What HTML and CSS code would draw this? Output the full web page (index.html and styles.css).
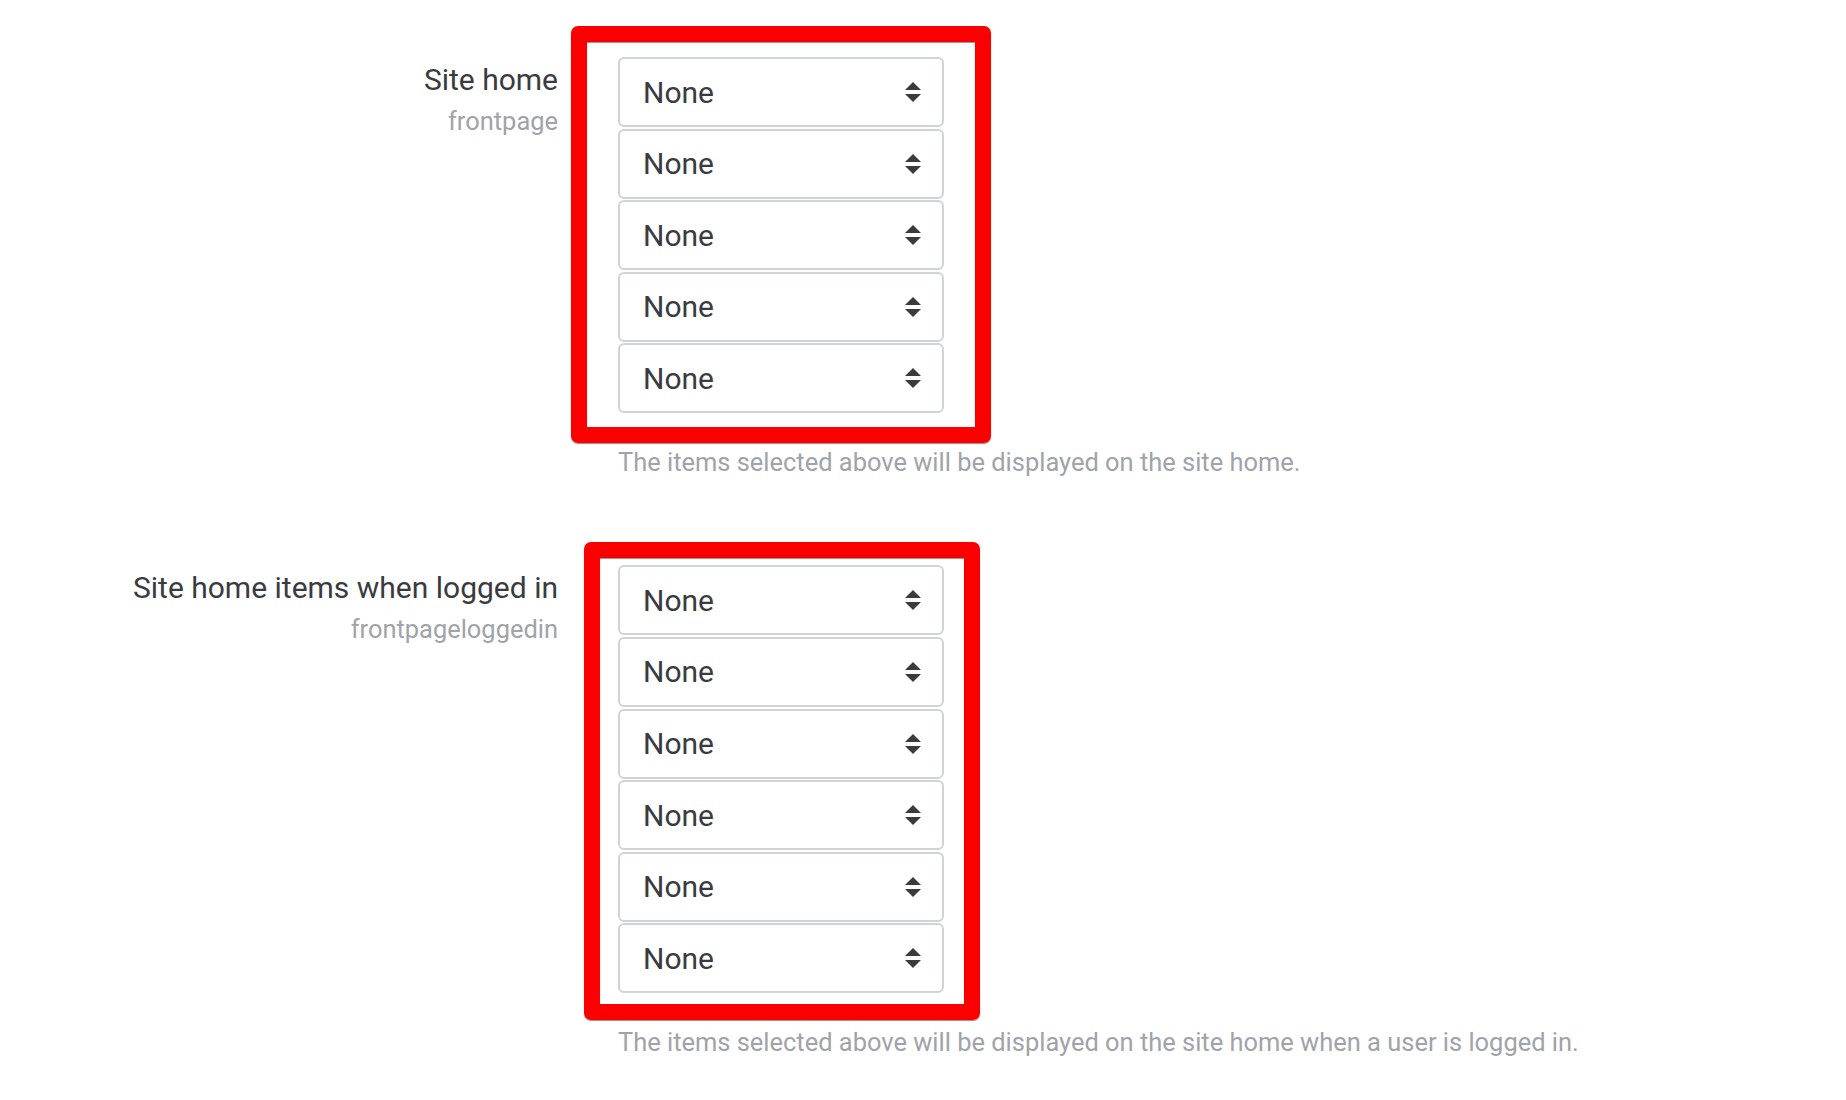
FILE: index.html
```html
<!DOCTYPE html>
<html>
<head>
<meta charset="utf-8">
<link rel="stylesheet" href="styles.css">
</head>
<body>
<div class="page">
  <div class="setting">
    <div class="label-col">
      <div class="label">Site home</div>
      <div class="sublabel">frontpage</div>
    </div>
    <div class="control-col">
      <div class="select-group">
        <div class="annot annot-1"></div>
        <div class="select"><span>None</span><svg class="arrow" viewBox="0 0 4 5" width="16" height="20"><path d="M2 0L0 2h4zm0 5L0 3h4z"/></svg></div>
        <div class="select"><span>None</span><svg class="arrow" viewBox="0 0 4 5" width="16" height="20"><path d="M2 0L0 2h4zm0 5L0 3h4z"/></svg></div>
        <div class="select"><span>None</span><svg class="arrow" viewBox="0 0 4 5" width="16" height="20"><path d="M2 0L0 2h4zm0 5L0 3h4z"/></svg></div>
        <div class="select"><span>None</span><svg class="arrow" viewBox="0 0 4 5" width="16" height="20"><path d="M2 0L0 2h4zm0 5L0 3h4z"/></svg></div>
        <div class="select"><span>None</span><svg class="arrow" viewBox="0 0 4 5" width="16" height="20"><path d="M2 0L0 2h4zm0 5L0 3h4z"/></svg></div>
      </div>
      <div class="help">The items selected above will be displayed on the site home.</div>
    </div>
  </div>
  <div class="setting">
    <div class="label-col">
      <div class="label">Site home items when logged in</div>
      <div class="sublabel">frontpageloggedin</div>
    </div>
    <div class="control-col">
      <div class="select-group">
        <div class="annot annot-2"></div>
        <div class="select"><span>None</span><svg class="arrow" viewBox="0 0 4 5" width="16" height="20"><path d="M2 0L0 2h4zm0 5L0 3h4z"/></svg></div>
        <div class="select"><span>None</span><svg class="arrow" viewBox="0 0 4 5" width="16" height="20"><path d="M2 0L0 2h4zm0 5L0 3h4z"/></svg></div>
        <div class="select"><span>None</span><svg class="arrow" viewBox="0 0 4 5" width="16" height="20"><path d="M2 0L0 2h4zm0 5L0 3h4z"/></svg></div>
        <div class="select"><span>None</span><svg class="arrow" viewBox="0 0 4 5" width="16" height="20"><path d="M2 0L0 2h4zm0 5L0 3h4z"/></svg></div>
        <div class="select"><span>None</span><svg class="arrow" viewBox="0 0 4 5" width="16" height="20"><path d="M2 0L0 2h4zm0 5L0 3h4z"/></svg></div>
        <div class="select"><span>None</span><svg class="arrow" viewBox="0 0 4 5" width="16" height="20"><path d="M2 0L0 2h4zm0 5L0 3h4z"/></svg></div>
      </div>
      <div class="help">The items selected above will be displayed on the site home when a user is logged in.</div>
    </div>
  </div>
</div>
</body>
</html>
```

FILE: styles.css
```css
html, body {
  margin: 0;
  padding: 0;
  background: #ffffff;
}

body {
  font-family: Roboto, "Liberation Sans", sans-serif;
  color: #343a40;
}

.page {
  padding-top: 57px;
}

.setting {
  display: grid;
  grid-template-columns: 558px 1fr;
  column-gap: 60px;
  margin-bottom: 88px;
}

.label-col {
  text-align: right;
}

.label {
  font-size: 30px;
  line-height: 36px;
  padding-top: 5px;
  color: #3a3b41;
  white-space: nowrap;
}

.sublabel {
  font-size: 25.45px;
  line-height: 30px;
  margin-top: 7.5px;
  color: #a0a3a9;
}

.control-col {
  min-width: 0;
}

.select-group {
  position: relative;
  width: 326px;
}

.select {
  box-sizing: border-box;
  width: 326px;
  height: 70px;
  margin-bottom: 1.6px;
  border: 2px solid #ced4da;
  border-radius: 6px;
  background: #ffffff;
  padding: 0 21px 0 23px;
  display: flex;
  align-items: center;
  justify-content: space-between;
  font-size: 30px;
  color: #3a3b41;
}

.select:last-of-type {
  margin-bottom: 0;
}

.arrow {
  display: block;
  fill: #3a3b41;
}

.help {
  font-size: 25.45px;
  line-height: 30px;
  margin-top: 34px;
  color: #a0a3a9;
  white-space: nowrap;
}

.annot {
  position: absolute;
  box-sizing: border-box;
  border: 16px solid #fa0000;
  border-radius: 7px;
  box-shadow: 0 1px 1px rgba(0, 0, 0, 0.45), inset 0 1px 1px rgba(0, 0, 0, 0.45);
  pointer-events: none;
  z-index: 2;
}

.annot-1 {
  left: -47px;
  top: -31px;
  width: 420px;
  height: 417px;
}

.annot-2 {
  left: -34px;
  top: -23px;
  width: 396px;
  height: 478px;
}
```
